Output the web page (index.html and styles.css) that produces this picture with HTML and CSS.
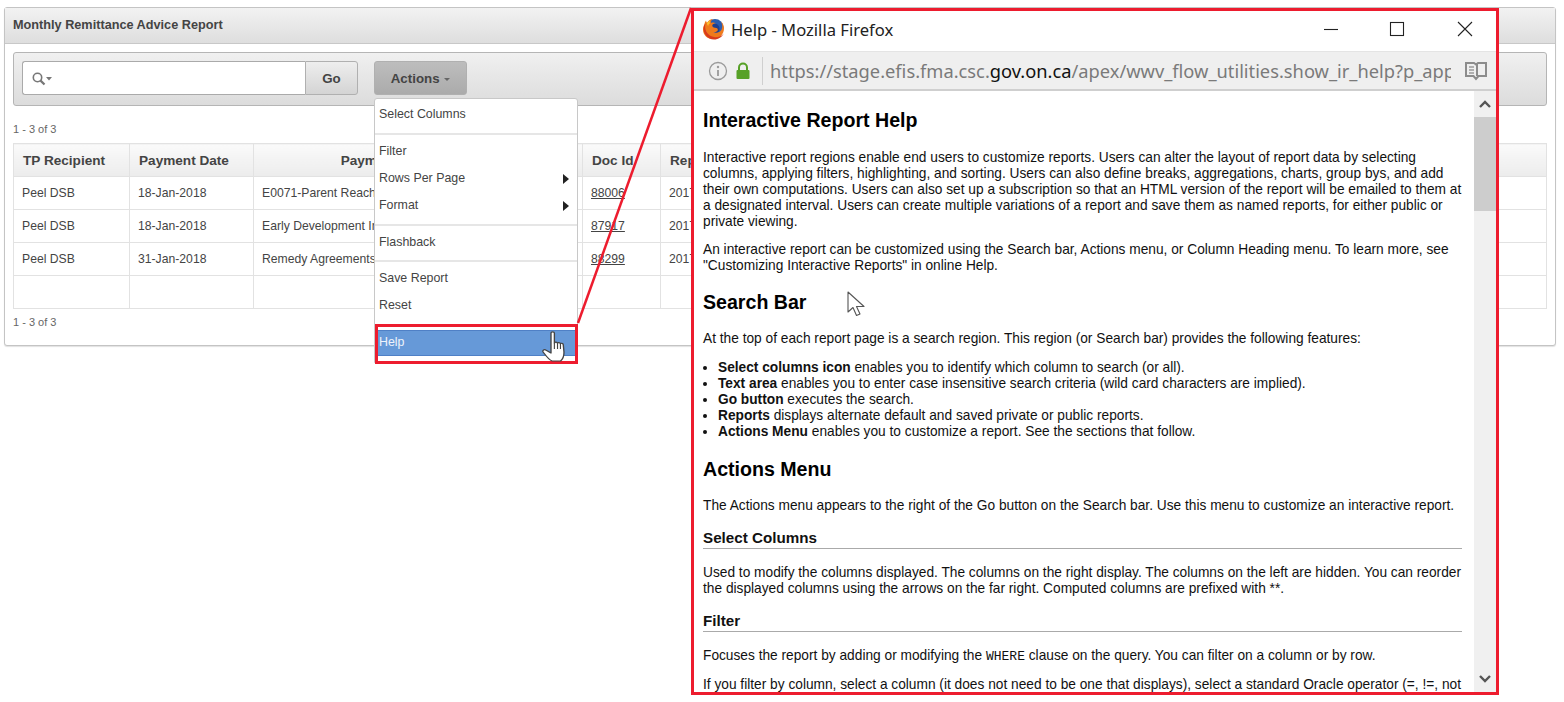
FILE: index.html
```html
<!DOCTYPE html>
<html lang="en">
<head>
<meta charset="utf-8">
<title>Monthly Remittance Advice Report</title>
<link rel="stylesheet" href="styles.css">
</head>
<body>
<div class="stage">
  <section class="panel">
    <header class="panel-head">Monthly Remittance Advice Report</header>
    <div class="panel-body">
      <div class="toolbar">
        <div class="search">
          <svg class="search-icon" width="22" height="14" viewBox="0 0 22 14"><circle cx="5.5" cy="5.5" r="4.2" fill="none" stroke="#777" stroke-width="1.6"/><path d="M8.6 8.6 12.5 12.5" stroke="#777" stroke-width="2.2" fill="none"/><path d="M14 5h6l-3 3.4z" fill="#777"/></svg>
        </div>
        <button class="btn go">Go</button>
        <button class="btn actions">Actions <span class="caret"></span></button>
      </div>
      <div class="pager">1 - 3 of 3</div>
      <table class="report">
        <thead>
          <tr><th class="c1">TP Recipient</th><th class="c2">Payment Date</th><th class="c3">Payment Description Title</th><th class="c4">Doc Id</th><th class="c5">Report Period</th></tr>
        </thead>
        <tbody>
          <tr><td>Peel DSB</td><td>18-Jan-2018</td><td>E0071-Parent Reaching Out</td><td><a href="#">88006</a></td><td>2017-18</td></tr>
          <tr><td>Peel DSB</td><td>18-Jan-2018</td><td>Early Development Instrument</td><td><a href="#">87917</a></td><td>2017-18</td></tr>
          <tr><td>Peel DSB</td><td>31-Jan-2018</td><td>Remedy Agreements</td><td><a href="#">88299</a></td><td>2017-18</td></tr>
          <tr><td>&nbsp;</td><td></td><td></td><td></td><td></td></tr>
        </tbody>
      </table>
      <div class="pager lower">1 - 3 of 3</div>
    </div>
  </section>

  <nav class="menu">
    <a class="item">Select Columns</a>
    <hr class="sep">
    <a class="item">Filter</a>
    <a class="item more">Rows Per Page</a>
    <a class="item more">Format</a>
    <hr class="sep">
    <a class="item">Flashback</a>
    <hr class="sep tight">
    <a class="item">Save Report</a>
    <a class="item">Reset</a>
    <div class="help-frame">
      <a class="item help">Help</a>
      <svg class="hand" width="27" height="32" viewBox="0 0 24 32" preserveAspectRatio="none"><path d="M8 2c0-1.600 3-1.600 3 0v10c.3-1.200 2.600-1.200 2.800.3.2-1 2.400-1 2.600.5.3-.9 2.300-.7 2.500.8l.6 7c.2 3.500-1 7.500-3 9.400H9C6 29 3 24 1 21c-.8-1.500 1-3.200 2.700-1.800L8 22z" fill="#fff" stroke="#444" stroke-width="1.200" stroke-linejoin="round"/><path d="M11 12v6M13.800 12.500v5.500M16.400 13v5" stroke="#444" stroke-width="1" fill="none"/></svg>
    </div>
  </nav>

  <svg class="callout" width="125" height="325" viewBox="0 0 125 325"><path d="M8 319 121 4" stroke="#ed1c2e" stroke-width="2.500" fill="none"/></svg>

  <article class="window">
    <div class="titlebar">
      <svg class="ff" width="24" height="24" viewBox="0 0 24 24">
        <circle cx="13" cy="10.500" r="8.500" fill="#2a5db0"/>
        <path d="M9 7.500c2-1.500 5-1.500 7 .5 1.800 1.800 2 4.500.8 6.500-1.200 2-3.800 3-6 2.200 1.800-.2 3.200-1.300 3.200-2.800 0-1.200-1.300-1.800-2.800-1.800-1.600 0-2.600-1-2.200-2.200.1-.9 0-1.700 0-2.400z" fill="#1e3f8f"/>
        <path d="M2.300 7.500C2.600 6 3.200 4.600 4 3.500c.1 1 .5 1.700 1 2.200C6.300 3.500 8.700 2 11 2c-1.500 1-2.300 2.500-2 4 1.500-.7 3.500-.6 5 .5-1.500-.2-3.500.5-3.700 1.800-.2 1.400 1 2.500 2.700 2.500 1.800 0 3 .8 2.800 2.200-.2 1.500-2.300 2.600-4.300 2.200 2.800 1.300 6.500.3 8-2.500 1.300-2.600.9-5.800-.6-7.900 1.900 1.200 3.100 3.600 3.100 6.700 0 5.700-4.600 10.500-10.500 10.500C5.500 22.500 1 18 1 12.500c0-1.800.5-3.500 1.300-5z" fill="#ef7a1c"/>
        <path d="M1.600 10.500c-.6 6 4 12 10.400 12 4.500 0 8-2.500 9.700-6-2.200 2.800-5.500 4-8.700 3.700C8 19.700 3.800 16 3.200 11c-.2-1.500 0-3 .3-4.500-1 1-1.600 2.500-1.900 4z" fill="#d83a1c"/>
        <path d="M5 6c.8-1 2-2 3.500-2.800C7.800 4.300 7.500 5.300 7.800 6.500 6.800 7 6.200 8 6.300 9 5.500 8.300 5 7.200 5 6z" fill="#fbc02d"/>
      </svg>
      <span class="win-title">Help - Mozilla Firefox</span>
      <span class="win-btns">
        <svg class="win-min" width="16" height="16" viewBox="0 0 16 16"><path d="M1 8.500h14" stroke="#222" stroke-width="1.100"/></svg>
        <svg width="16" height="16" viewBox="0 0 16 16"><rect x="1.500" y="1.500" width="13" height="13" fill="none" stroke="#222" stroke-width="1.100"/></svg>
        <svg width="16" height="16" viewBox="0 0 16 16"><path d="M1 1 15 15M15 1 1 15" stroke="#222" stroke-width="1.100"/></svg>
      </span>
    </div>
    <div class="urlbar">
      <svg class="info" width="20" height="20" viewBox="0 0 20 20"><circle cx="10" cy="10" r="8.500" fill="none" stroke="#9a9a9a" stroke-width="1.300"/><circle cx="10" cy="6" r="1.200" fill="#9a9a9a"/><path d="M10 9v6" stroke="#9a9a9a" stroke-width="1.800"/></svg>
      <svg class="lock" width="16" height="18" viewBox="0 0 16 18"><path d="M4 8V5.500a4 4 0 0 1 8 0V8" fill="none" stroke="#57a127" stroke-width="2"/><rect x="1.500" y="8" width="13" height="9" rx="1" fill="#57a127"/></svg>
      <span class="url"><span class="dim">https://stage.efis.fma.csc.</span>gov.on.ca<span class="dim">/apex/wwv_flow_utilities.show_ir_help?p_app_id=100</span></span>
      <svg class="reader" width="24" height="20" viewBox="0 0 24 20"><path d="M2 2h8l2 1.500L14 2h8v13h-7.500L12 18l-2.500-3H2zM13 3v12" fill="none" stroke="#8c8c8c" stroke-width="2"/><path d="M5 6h5M5 9h5M5 12h5" stroke="#9c9c9c" stroke-width="1.300"/></svg>
    </div>
    <div class="viewport">
      <div class="doc">
        <h1>Interactive Report Help</h1>
        <p>Interactive report regions enable end users to customize reports. Users can alter the layout of report data by selecting columns, applying filters, highlighting, and sorting. Users can also define breaks, aggregations, charts, group bys, and add their own computations. Users can also set up a subscription so that an HTML version of the report will be emailed to them at a designated interval. Users can create multiple variations of a report and save them as named reports, for either public or private viewing.</p>
        <p>An interactive report can be customized using the Search bar, Actions menu, or Column Heading menu. To learn more, see "Customizing Interactive Reports" in online Help.</p>
        <h2>Search Bar</h2>
        <p>At the top of each report page is a search region. This region (or Search bar) provides the following features:</p>
        <ul>
          <li><b>Select columns icon</b> enables you to identify which column to search (or all).</li>
          <li><b>Text area</b> enables you to enter case insensitive search criteria (wild card characters are implied).</li>
          <li><b>Go button</b> executes the search.</li>
          <li><b>Reports</b> displays alternate default and saved private or public reports.</li>
          <li><b>Actions Menu</b> enables you to customize a report. See the sections that follow.</li>
        </ul>
        <h2>Actions Menu</h2>
        <p>The Actions menu appears to the right of the Go button on the Search bar. Use this menu to customize an interactive report.</p>
        <h3>Select Columns</h3>
        <p>Used to modify the columns displayed. The columns on the right display. The columns on the left are hidden. You can reorder the displayed columns using the arrows on the far right. Computed columns are prefixed with **.</p>
        <h3>Filter</h3>
        <p>Focuses the report by adding or modifying the <code>WHERE</code> clause on the query. You can filter on a column or by row.</p>
        <p>If you filter by column, select a column (it does not need to be one that displays), select a standard Oracle operator (=, !=, not in, between), and enter an expression to compare against.</p>
      </div>
      <div class="scrollbar">
        <svg width="14" height="10" viewBox="0 0 14 10"><path d="M2 8 7 3l5 5" fill="none" stroke="#555" stroke-width="2.400"/></svg>
        <div class="thumb"></div>
        <div class="track"></div>
        <svg width="14" height="10" viewBox="0 0 14 10"><path d="M2 2l5 5 5-5" fill="none" stroke="#555" stroke-width="2.400"/></svg>
      </div>
      <svg class="pointer" width="20" height="26" viewBox="0 0 20 26"><path d="M1 1v20l5-4.500 3.500 8 3.500-1.500-3.500-7.500H17z" fill="#fff" stroke="#555" stroke-width="1.100" stroke-linejoin="round"/></svg>
    </div>
  </article>
</div>
</body>
</html>
```
FILE: styles.css
```css
* { box-sizing: border-box; }
html, body { margin: 0; padding: 0; background: #fff; }
body { font-family: "Liberation Sans", Arial, sans-serif; color: #333; overflow: hidden; }
.stage { position: relative; width: 1564px; height: 702px; overflow: hidden; padding: 7px 8px 0 4px; }

.panel { height: 339px; border: 1px solid #c4c4c4; border-radius: 3px; box-shadow: 0 1px 1px rgba(0,0,0,.12); background: #fff; }
.panel-head { height: 36px; line-height: 34px; padding-left: 8px; font-size: 12.7px; font-weight: bold; color: #444; background: linear-gradient(#f2f2f2, #dedede); border-bottom: 1px solid #c8c8c8; }
.panel-body { padding: 8px 8px 0 8px; }

.toolbar { display: flex; height: 54px; padding: 8px 8px 0; border: 1px solid #b5b5b5; border-radius: 3px; background: linear-gradient(#f0f0f0, #dcdcdc); }
.search { width: 283px; height: 34px; background: #fff; border: 1px solid #aaa; border-right: 0; border-radius: 3px 0 0 3px; padding: 10px 0 0 9px; }
.search-icon { display: block; }
.btn { height: 34px; font: bold 13.3px "Liberation Sans", Arial, sans-serif; color: #444; border: 1px solid #b0b0b0; }
.go { width: 53px; border-radius: 0 3px 3px 0; background: linear-gradient(#eee, #d4d4d4); }
.actions { width: 93px; margin-left: 16px; border-radius: 3px; background: linear-gradient(#bdbdbd, #ababab); }
.caret { display: inline-block; margin: 0 0 2px 1px; border: 3px solid transparent; border-top: 3px solid #666; border-bottom: 0; }

.pager { height: 37px; padding-top: 17px; font-size: 11px; color: #666; line-height: 12px; }
.pager.lower { height: auto; padding-top: 7px; }

.report { width: 1534px; table-layout: fixed; border-collapse: collapse; font-size: 12.2px; }
.report th, .report td { height: 33px; border: 1px solid #e2e2e2; padding: 0 8px; white-space: nowrap; overflow: hidden; text-align: left; }
.report td { color: #444; }
.report th { font-size: 13.6px; font-weight: bold; padding: 0 9px; background: linear-gradient(#fafafa, #ececec); color: #444; }
.report th.c3 { text-align: center; padding-left: 21px; }
.report a { color: #444; }
.c1 { width: 116px; }
.c2 { width: 124px; }
.c3 { width: 329px; }
.c4 { width: 78px; }

.menu { position: absolute; left: 374px; top: 98px; width: 204px; height: 265px; padding: 2px 0 0; background: #fff; border: 1px solid #c8c8c8; border-radius: 3px 3px 0 0; font-size: 12.4px; color: #444; }
.item { display: block; height: 27px; line-height: 27px; padding-left: 4px; position: relative; }
.item.more::after { content: ""; position: absolute; right: 8px; top: 9px; border: 5px solid transparent; border-left: 6px solid #222; border-right: 0; }
.sep { height: 2px; margin: 5px 0 3px; border: 0; background: #e6e6e6; }
.sep.tight { margin-top: 4px; }
.help-frame { position: relative; margin: 5px -1px 0 0; height: 40px; border: 3px solid #ed1c2e; padding-top: 3px; }
.help { height: 26px; line-height: 23px; padding-left: 1px; color: #eef3fb; background: #6699d8; border-top: 1px solid #4f80c6; border-bottom: 1px solid #4f80c6; }
.hand { position: absolute; left: 164px; top: 4px; }

.callout { position: absolute; left: 570px; top: 4px; pointer-events: none; }

.window { position: absolute; left: 691px; top: 8px; width: 808px; height: 687px; display: flex; flex-direction: column; border: 3px solid #ed1c2e; background: #fff; }
.titlebar { display: flex; align-items: center; height: 40px; flex: none; padding: 0 0 4px 8px; }
.ff { flex: none; }
.win-title { margin: 1px 0 0 5px; font: 16.6px "Noto Sans", "Open Sans", sans-serif; color: #222; }
.win-btns { display: flex; margin-left: auto; margin-right: 23px; gap: 52px; }
.win-min { margin-right: -2px; }
.urlbar { display: flex; align-items: center; height: 40px; flex: none; background: #efefef; border-top: 1px solid #e4e4e4; border-bottom: 2px solid #cfcfcf; padding-left: 14px; }
.lock { margin-left: 7px; flex: none; }
.info { flex: none; }
.url { flex: none; width: 689px; margin-left: 11px; padding-left: 7px; border-left: 1px solid #cfcfcf; font: 18.3px/28px "Noto Sans", "Open Sans", sans-serif; color: #111; white-space: nowrap; overflow: hidden; }
.dim { color: #7a7a7a; }
.reader { margin-left: 13px; flex: none; }

.viewport { position: relative; display: flex; flex: 1; min-height: 0; overflow: hidden; }
.doc { flex: 1; min-width: 0; padding: 0 12px 0 9px; overflow: hidden; font-size: 13.72px; line-height: 16px; color: #111; }
.doc h1 { margin: 17px 0 18px; font-size: 19.6px; line-height: 24px; color: #000; }
.doc h2 { margin: 17px 0 18px; font-size: 19.6px; line-height: 22px; color: #000; }
.doc h3 { margin: 15px 0 16px; padding-bottom: 1px; font-size: 15.2px; line-height: 18px; color: #111; border-bottom: 1px solid #aaa; }
.doc p { margin: 0 0 12px; }
.doc ul { margin: 13px 0 18px; padding-left: 15px; list-style: disc; }
.doc code { font-family: "Liberation Mono", monospace; font-size: 13px; }
.scrollbar { flex: none; width: 22px; display: flex; flex-direction: column; align-items: center; background: #f0f0f0; }
.scrollbar svg { flex: none; margin: 8px 0; }
.thumb { flex: none; width: 100%; height: 94px; background: #cdcdcd; }
.track { flex: 1; }
.pointer { position: absolute; left: 153px; top: 200px; }
```
